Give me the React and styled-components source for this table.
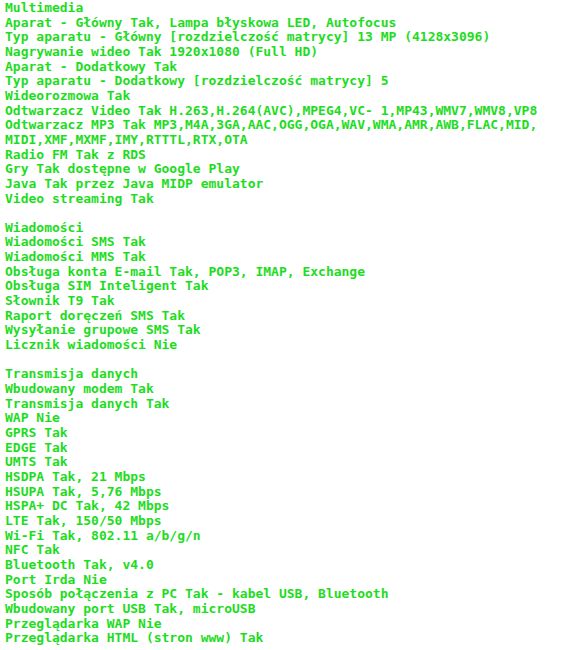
import React from 'react';
import styled, { createGlobalStyle } from 'styled-components';

const GlobalStyle = createGlobalStyle`
	html, body {
		margin: 0;
		padding: 0;
		background: #ffffff;
	}
`;

const Page = styled.div`
	padding: 1px 0 0 5px;
	font-family: 'DejaVu Sans Mono', 'Liberation Mono', monospace;
	font-weight: bold;
	font-size: 13px;
	line-height: 14.65px;
	color: #1edc1e;
	white-space: pre;
`;

const Section = styled.section`
	margin-bottom: 14.65px;

	&:last-child {
		margin-bottom: 0;
	}
`;

const Heading = styled.div``;

const Row = styled.div``;

const sections = [
	{
		title: 'Multimedia',
		rows: [
			'Aparat - Główny Tak, Lampa błyskowa LED, Autofocus',
			'Typ aparatu - Główny [rozdzielczość matrycy] 13 MP (4128x3096)',
			'Nagrywanie wideo Tak 1920x1080 (Full HD)',
			'Aparat - Dodatkowy Tak',
			'Typ aparatu - Dodatkowy [rozdzielczość matrycy] 5',
			'Wideorozmowa Tak',
			'Odtwarzacz Video Tak H.263,H.264(AVC),MPEG4,VC- 1,MP43,WMV7,WMV8,VP8',
			'Odtwarzacz MP3 Tak MP3,M4A,3GA,AAC,OGG,OGA,WAV,WMA,AMR,AWB,FLAC,MID,',
			'MIDI,XMF,MXMF,IMY,RTTTL,RTX,OTA',
			'Radio FM Tak z RDS',
			'Gry Tak dostępne w Google Play',
			'Java Tak przez Java MIDP emulator',
			'Video streaming Tak',
		],
	},
	{
		title: 'Wiadomości',
		rows: [
			'Wiadomości SMS Tak',
			'Wiadomości MMS Tak',
			'Obsługa konta E-mail Tak, POP3, IMAP, Exchange',
			'Obsługa SIM Inteligent Tak',
			'Słownik T9 Tak',
			'Raport doręczeń SMS Tak',
			'Wysyłanie grupowe SMS Tak',
			'Licznik wiadomości Nie',
		],
	},
	{
		title: 'Transmisja danych',
		rows: [
			'Wbudowany modem Tak',
			'Transmisja danych Tak',
			'WAP Nie',
			'GPRS Tak',
			'EDGE Tak',
			'UMTS Tak',
			'HSDPA Tak, 21 Mbps',
			'HSUPA Tak, 5,76 Mbps',
			'HSPA+ DC Tak, 42 Mbps',
			'LTE Tak, 150/50 Mbps',
			'Wi-Fi Tak, 802.11 a/b/g/n',
			'NFC Tak',
			'Bluetooth Tak, v4.0',
			'Port Irda Nie',
			'Sposób połączenia z PC Tak - kabel USB, Bluetooth',
			'Wbudowany port USB Tak, microUSB',
			'Przeglądarka WAP Nie',
			'Przeglądarka HTML (stron www) Tak',
		],
	},
];

function App() {
	return (
		<>
			<GlobalStyle />
			<Page>
				{sections.map(section => (
					<Section key={section.title}>
						<Heading>{section.title}</Heading>
						{section.rows.map(row => (
							<Row key={row}>{row}</Row>
						))}
					</Section>
				))}
			</Page>
		</>
	);
}

export default App;
